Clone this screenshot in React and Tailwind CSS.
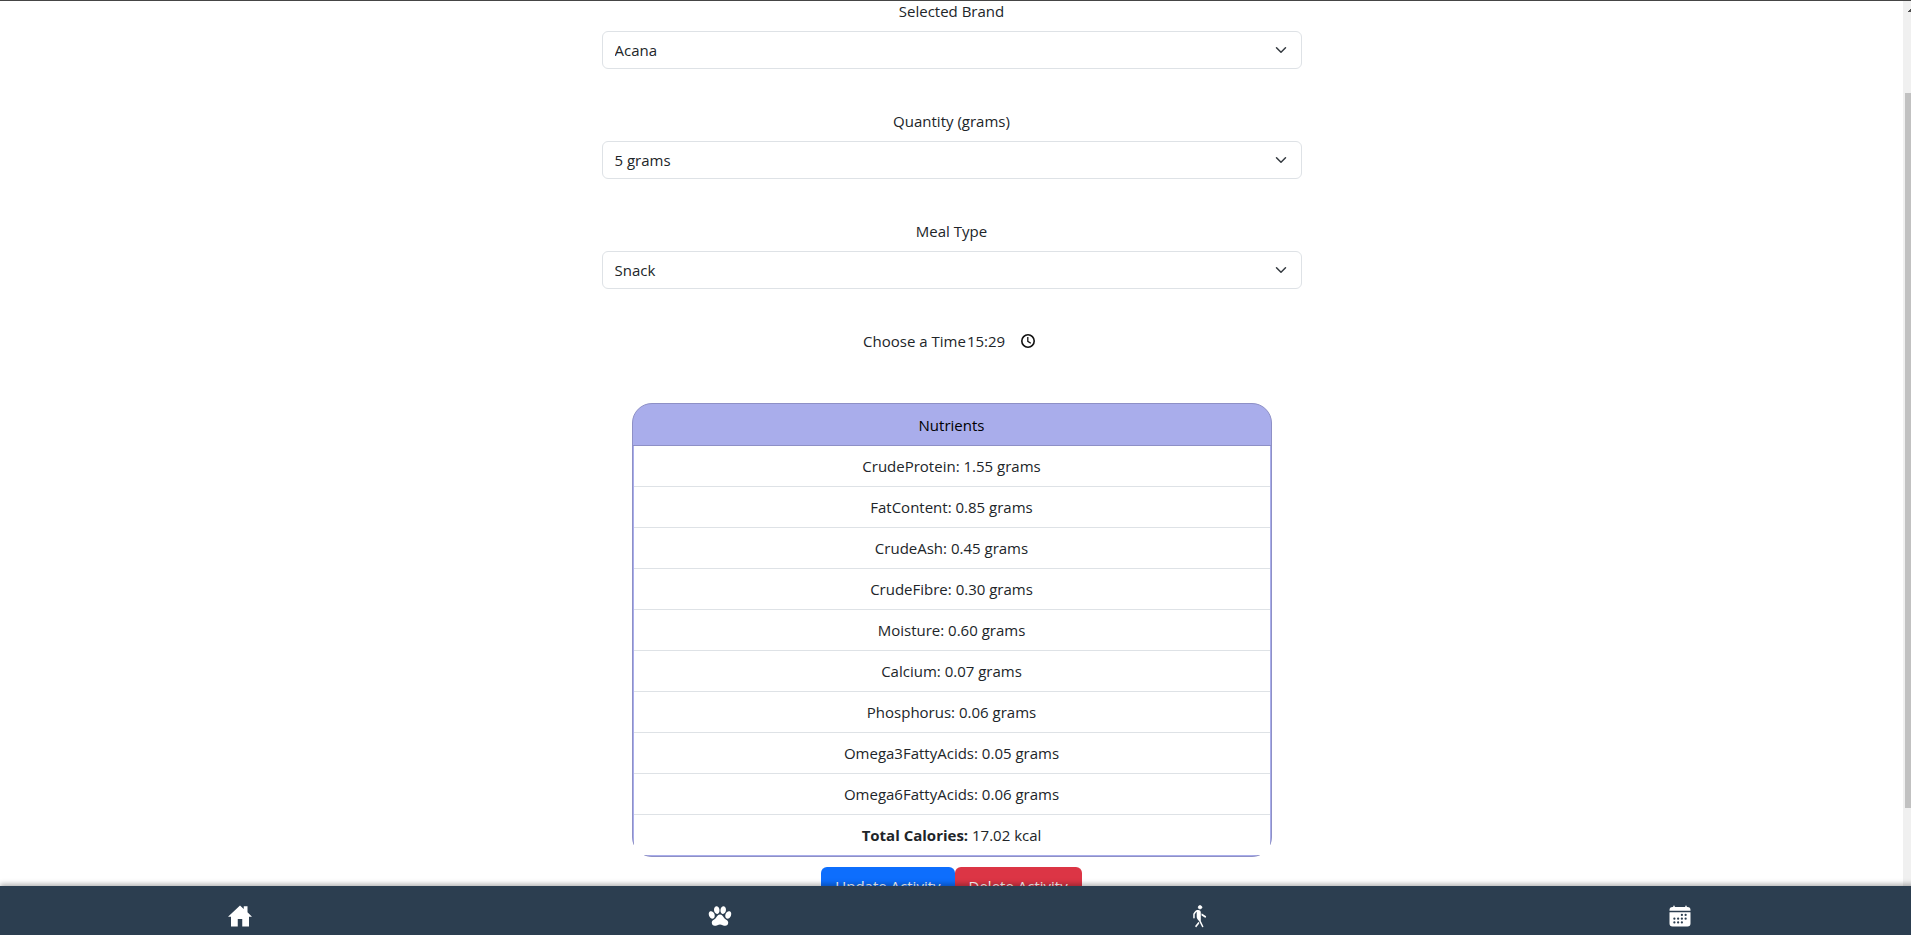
import { useState } from 'react';
import { IoHomeSharp, IoPaw, IoWalk, IoCalendar } from 'react-icons/io5';

const nutrients = [
  ['CrudeProtein', '1.55'],
  ['FatContent', '0.85'],
  ['CrudeAsh', '0.45'],
  ['CrudeFibre', '0.30'],
  ['Moisture', '0.60'],
  ['Calcium', '0.07'],
  ['Phosphorus', '0.06'],
  ['Omega3FattyAcids', '0.05'],
  ['Omega6FattyAcids', '0.06'],
];

const links = [
  { label: 'Home', href: '#home', Icon: IoHomeSharp },
  { label: 'Pets', href: '#pets', Icon: IoPaw },
  { label: 'Walks', href: '#walks', Icon: IoWalk },
  { label: 'Calendar', href: '#calendar', Icon: IoCalendar },
];

function SelectField({ id, label, options }) {
  return (
    <div className="mb-[42px] flex flex-col">
      <label htmlFor={id} className="mb-2.5 text-center leading-5">
        {label}
      </label>
      <div className="grid items-center">
        <select
          id={id}
          className="col-start-1 row-start-1 h-[38px] w-full appearance-none rounded-md border border-[#dee2e6] bg-white px-3 text-[#212529]"
        >
          {options.map((o) => (
            <option key={o}>{o}</option>
          ))}
        </select>
        <svg
          viewBox="0 0 16 16"
          className="pointer-events-none col-start-1 row-start-1 mr-[13px] h-3 w-4 justify-self-end"
          fill="none"
          stroke="#343a40"
          strokeWidth="2"
          strokeLinecap="round"
          strokeLinejoin="round"
        >
          <path d="m2 5 6 6 6-6" />
        </svg>
      </div>
    </div>
  );
}

function TimeField() {
  const [time, setTime] = useState('15:29');
  return (
    <div className="mb-[52px] flex h-5 items-center justify-center leading-5">
      <label htmlFor="time">Choose a Time</label>
      <input
        id="time"
        type="text"
        value={time}
        onChange={(e) => setTime(e.target.value)}
        className="w-[54px] bg-transparent pl-px"
      />
      <button type="button" aria-label="Pick a time" className="mr-1">
        <svg viewBox="0 0 16 16" className="h-4 w-4" fill="none" stroke="#111" strokeWidth="1.6">
          <circle cx="8" cy="8" r="6.2" />
          <path d="M7.8 4v4.4l3 1.8" strokeWidth="1.3" />
        </svg>
      </button>
    </div>
  );
}

function NutrientCard() {
  return (
    <section className="mx-[30px] rounded-[20px] border border-[#8e90c6] bg-[#a9adeb]">
      <h2 className="border-b border-[#8e90c6] pt-[9px] pb-2 text-center leading-6 text-black">
        Nutrients
      </h2>
      <ul className="mx-px mb-px divide-y divide-[#dee2e6] bg-white text-center">
        {nutrients.map(([name, grams]) => (
          <li key={name} className="py-2 leading-6">
            {name}: {grams} grams
          </li>
        ))}
        <li className="py-2 leading-6">
          <strong className="font-bold">Total Calories:</strong> 17.02 kcal
        </li>
      </ul>
    </section>
  );
}

function Scrollbar() {
  return (
    <div aria-hidden="true" className="flex w-2 shrink-0 flex-col items-end bg-[#f0f0f0]">
      <svg viewBox="0 0 3 3" className="mt-2 h-[3px] w-[3px]" fill="#505050">
        <path d="M0 3V2h1V1h1V0h1v3z" />
      </svg>
      <div className="mt-[81px] h-[715px] w-1.5 bg-[#c1c1c1]" />
    </div>
  );
}

export default function App() {
  return (
    <div className="flex h-screen flex-col overflow-hidden border-t border-[#454545] bg-white font-['Open_Sans','Noto_Sans',sans-serif] text-[15px] text-[#212529]">
      <div className="flex min-h-0 flex-1">
        <main className="min-w-0 flex-1 overflow-hidden">
          <div className="mx-auto w-full max-w-[700px]">
            <SelectField id="brand" label="Selected Brand" options={['Acana']} />
            <SelectField id="quantity" label="Quantity (grams)" options={['5 grams']} />
            <SelectField id="meal" label="Meal Type" options={['Snack']} />
            <TimeField />
            <NutrientCard />
            <div className="mt-2.5 flex justify-center text-white">
              <button type="button" className="h-[38px] rounded-md bg-[#0d6efd] px-3.5">
                Update Activity
              </button>
              <button type="button" className="h-[38px] rounded-md bg-[#dc3545] px-3.5">
                Delete Activity
              </button>
            </div>
          </div>
        </main>
        <Scrollbar />
      </div>
      <nav className="relative -mr-[9px] grid h-[49px] shrink-0 grid-cols-4 bg-[#2c3e50] text-white shadow-[0_-2px_5px_rgba(0,0,0,0.3)]">
        {links.map(({ label, href, Icon }) => (
          <a key={label} href={href} aria-label={label} className="flex justify-center pt-[18px]">
            <Icon className="h-6 w-6" />
          </a>
        ))}
      </nav>
    </div>
  );
}
